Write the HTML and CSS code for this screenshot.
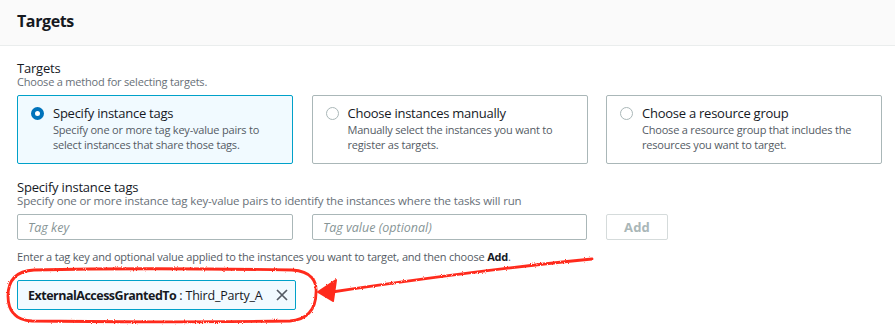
FILE: index.html
```html
<!DOCTYPE html>
<html>
<head>
<meta charset="utf-8">
<link rel="stylesheet" href="styles.css">
</head>
<body>
<div class="panel">
  <div class="header"><h2 class="title">Targets</h2></div>
  <div class="body">
    <div class="field">
      <div class="label">Targets</div>
      <div class="desc short">Choose a method for selecting targets.</div>
      <div class="cards">
        <div class="card selected">
          <span class="radio on"></span>
          <div class="card-text">
            <div class="card-title">Specify instance tags</div>
            <div class="card-desc">Specify one or more tag key-value pairs to select instances that share those tags.</div>
          </div>
        </div>
        <div class="card">
          <span class="radio"></span>
          <div class="card-text">
            <div class="card-title">Choose instances manually</div>
            <div class="card-desc">Manually select the instances you want to register as targets.</div>
          </div>
        </div>
        <div class="card">
          <span class="radio"></span>
          <div class="card-text">
            <div class="card-title">Choose a resource group</div>
            <div class="card-desc">Choose a resource group that includes the resources you want to target.</div>
          </div>
        </div>
      </div>
    </div>
    <div class="field second">
      <div class="label">Specify instance tags</div>
      <div class="desc">Specify one or more instance tag key-value pairs to identify the instances where the tasks will run</div>
      <div class="inputs">
        <input class="input" type="text" placeholder="Tag key">
        <input class="input" type="text" placeholder="Tag value (optional)">
        <button class="btn" disabled>Add</button>
      </div>
      <div class="hint">Enter a tag key and optional value applied to the instances you want to target, and then choose <b>Add</b>.</div>
      <div class="tokens">
        <div class="token">
          <span class="token-label"><b>ExternalAccessGrantedTo</b> : Third_Party_A</span>
          <svg class="token-x" width="12" height="12" viewBox="0 0 12 12"><path d="M1 1 L11 11 M11 1 L1 11" stroke="#545b64" stroke-width="1.7" fill="none"/></svg>
        </div>
      </div>
    </div>
  </div>
  <svg class="annot" width="895" height="329" viewBox="0 0 895 329">
    <defs>
      <filter id="rough" x="-5%" y="-5%" width="110%" height="110%">
        <feTurbulence type="fractalNoise" baseFrequency="0.9" numOctaves="2" result="n"/>
        <feDisplacementMap in="SourceGraphic" in2="n" scale="2.5"/>
      </filter>
    </defs>
    <g filter="url(#rough)" stroke="#ff2b1c" fill="none" stroke-width="2.8" stroke-linecap="round" stroke-linejoin="round">
      <path d="M34 270 C 120 268, 230 269, 292 270 C 312 271, 317 282, 316 293 C 316 310, 306 320, 290 321 C 200 322, 100 322, 32 321 C 14 320, 8 310, 8 296 C 8 280, 16 271, 34 270 Z"/>
      <path d="M592 259 C 520 266, 420 279, 332 292"/>
    </g>
    <path filter="url(#rough)" d="M318 292 L336 280 L333 301 Z" fill="#ff2b1c" stroke="#ff2b1c" stroke-width="2" stroke-linejoin="round"/>
  </svg>
</div>
</body>
</html>
```
FILE: styles.css
```css
* { box-sizing: border-box; }
html, body { margin: 0; padding: 0; background: #ffffff; }
body {
  font-family: "Open Sans", "Noto Sans", Arial, sans-serif;
  color: #16191f;
  width: 895px;
  height: 329px;
  overflow: hidden;
}
.panel { position: relative; width: 895px; height: 329px; }
.header {
  height: 46px;
  background: #fafafa;
  border-bottom: 1px solid #eaeded;
  padding: 0 17px;
  display: flex;
  align-items: center;
}
.title {
  margin: 0;
  font-size: 16px;
  font-weight: 700;
  letter-spacing: -0.4px;
  line-height: 22px;
  margin-top: -4px;
}
.body { padding: 15px 17px 0 17px; }
.label {
  font-size: 13px;
  line-height: 14px;
  letter-spacing: -0.2px;
  color: #16191f;
}
.desc {
  font-size: 11.5px;
  line-height: 14px;
  letter-spacing: -0.15px;
  color: #687078;
}
.desc.short { font-size: 11px; letter-spacing: -0.2px; }
.cards {
  display: grid;
  grid-template-columns: 276px 276px 276px;
  column-gap: 18.5px;
  margin-top: 6px;
}
.card {
  height: 69px;
  border: 1px solid #aab7b8;
  border-radius: 2px;
  background: #ffffff;
  display: flex;
  align-items: flex-start;
  padding: 9px 12px 0 13px;
}
.card.selected {
  border-color: #00a1c9;
  background: #f1faff;
}
.radio {
  flex: none;
  width: 13px;
  height: 13px;
  border-radius: 50%;
  border: 1px solid #aab7b8;
  background: #fff;
  margin-top: 2px;
  margin-right: 9px;
}
.radio.on {
  border: 4px solid #0073bb;
}
.card-title {
  font-size: 13px;
  line-height: 17px;
  letter-spacing: -0.25px;
  color: #16191f;
}
.card-desc {
  font-size: 11px;
  line-height: 15px;
  letter-spacing: -0.2px;
  color: #545b64;
}
.second { margin-top: 16px; }
.inputs {
  display: flex;
  margin-top: 6px;
  gap: 19px;
}
.input {
  width: 276px;
  height: 26px;
  border: 1px solid #aab7b8;
  border-radius: 2px;
  padding: 0 10px;
  font-family: inherit;
  font-size: 12.5px;
  background: #fff;
  color: #16191f;
}
.input:last-of-type { width: 275px; }
.input::placeholder { color: #879596; font-style: italic; }
.btn {
  width: 62px;
  height: 26px;
  border: 1px solid #d5dbdb;
  border-radius: 2px;
  background: #fff;
  color: #aab7b8;
  font-family: inherit;
  font-weight: 700;
  font-size: 13px;
  letter-spacing: 0.2px;
  padding: 0;
}
.hint {
  font-size: 11px;
  line-height: 14px;
  letter-spacing: -0.2px;
  color: #545b64;
  margin-top: 10px;
}
.hint b { color: #16191f; font-weight: 700; }
.tokens { margin-top: 16px; display: flex; }
.token {
  width: 279px;
  height: 30px;
  border: 1px solid #00a1c9;
  border-radius: 2px;
  background: #f1faff;
  display: flex;
  align-items: center;
  padding: 0 7px 0 10px;
  overflow: hidden;
}
.token-label {
  flex: 1;
  white-space: nowrap;
  overflow: hidden;
  font-size: 12.5px;
  letter-spacing: -0.2px;
  color: #16191f;
}
.token-label b { font-weight: 700; letter-spacing: -0.5px; }
.token-x { flex: none; margin-left: 4px; }
.annot { position: absolute; left: 0; top: 0; pointer-events: none; }
```
